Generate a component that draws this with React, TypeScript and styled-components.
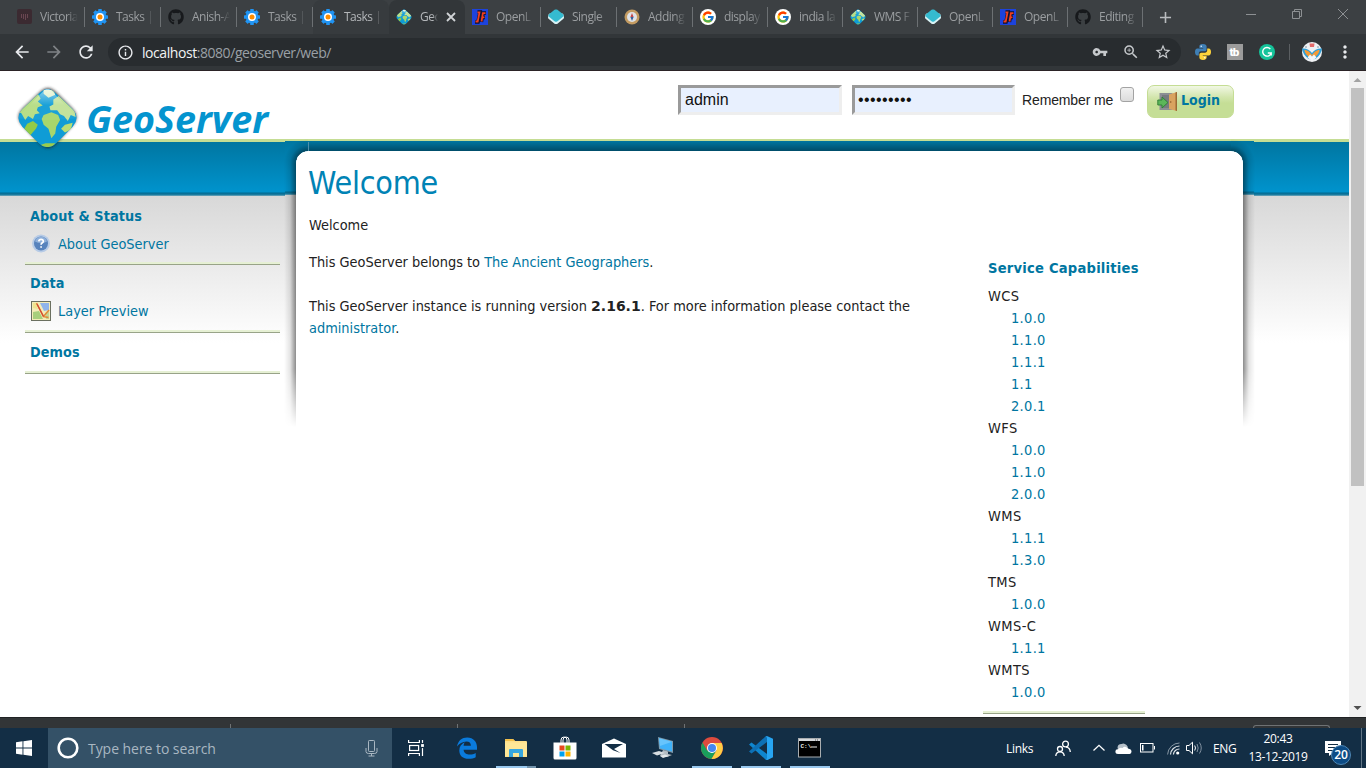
import React from 'react';
import styled, { createGlobalStyle } from 'styled-components';
import { FaGithub } from 'react-icons/fa';
import { FcGoogle } from 'react-icons/fc';
import {
  MdArrowBack, MdArrowForward, MdRefresh, MdInfoOutline, MdVpnKey, MdZoomIn,
  MdStarBorder, MdMoreVert, MdAdd,
} from 'react-icons/md';

const Global = createGlobalStyle`
  * { box-sizing: border-box; }
  body { margin: 0; overflow: hidden; background: #fff; }
  svg { flex: none; }
`;

const ui = `'Open Sans', 'Noto Sans', sans-serif`;
const tahoma = `'DejaVu Sans Condensed', 'DejaVu Sans', sans-serif`;

const Screen = styled.div`
  width: 1366px;
  height: 768px;
  display: flex;
  flex-direction: column;
  overflow: hidden;
  font-family: ${ui};
`;

/* ---------- browser chrome ---------- */

const TabStrip = styled.div`
  height: 34px;
  flex: none;
  display: flex;
  padding-left: 9px;
  background: #3c4043;
`;

const Tab = styled.div<{ $state?: 'active' | 'hover'; $line?: boolean; $w: number }>`
  position: relative;
  width: ${p => p.$w}px;
  flex: none;
  display: flex;
  align-items: center;
  padding-left: 7px;
  gap: 8px;
  color: ${p => (p.$state ? '#b4b7ba' : '#9b9ea1')};
  background: ${p => (p.$state === 'active' ? '#323639' : p.$state === 'hover' ? '#373b3e' : 'none')};
  border-radius: 8px 8px 0 0;
  &::after {
    content: '';
    position: absolute;
    right: 0;
    top: 7px;
    width: 1px;
    height: 20px;
    background: ${p => (p.$line ? '#6c7073' : 'transparent')};
  }
`;

const TabTitle = styled.span<{ $w?: number }>`
  width: ${p => p.$w ?? 38}px;
  flex: none;
  overflow: hidden;
  white-space: nowrap;
  font-size: 12px;
  letter-spacing: -0.5px;
  line-height: 18px;
  mask-image: linear-gradient(90deg, #000 70%, transparent);
`;

const NewTab = styled.div`
  width: 44px;
  display: flex;
  align-items: center;
  justify-content: center;
  color: #b9bcbf;
`;

const WindowButtons = styled.div`
  margin-left: auto;
  height: 28px;
  display: flex;
  svg { width: 46px; height: 28px; display: block; }
`;

const Toolbar = styled.div`
  height: 36px;
  flex: none;
  display: flex;
  align-items: center;
  padding: 0 12px;
  background: #323639;
  color: #e8eaed;
`;

const NavIcons = styled.div`
  display: flex;
  gap: 12px;
  width: 96px;
  flex: none;
  svg { width: 20px; height: 20px; }
  svg:nth-child(2) { color: #7f8386; }
`;

const Address = styled.div`
  width: 1073px;
  height: 28px;
  flex: none;
  border-radius: 14px;
  background: #282c2f;
  display: flex;
  align-items: center;
  padding: 0 9px;
  font-size: 14px;
  color: #9aa0a6;
`;

const Url = styled.span`
  margin-left: 8px;
  letter-spacing: -0.44px;
  flex: 1;
  b { font-weight: 400; color: #f1f3f4; }
`;

const AddressIcons = styled.div`
  display: flex;
  gap: 14px;
  color: #c6c9cc;
  svg { width: 18px; height: 18px; }
  svg:first-child { width: 16px; height: 18px; }
`;

const Extensions = styled.div`
  display: flex;
  align-items: center;
  margin-left: 14px;
  gap: 16px;
`;

const Avatar = styled.div`
  display: flex;
  align-items: center;
  gap: 11px;
  margin-left: 14px;
  padding-left: 12px;
  border-left: 1px solid #5b5f62;
  height: 16px;
  > svg:last-child { margin-left: 2px; }
`;

/* ---------- page ---------- */

const Viewport = styled.div`
  height: 647px;
  flex: none;
  display: flex;
  border-top: 1px solid #2b2326;
`;

const blueBand = (shift: number) => `
  linear-gradient(180deg,
    #c5dd94 0, #c5dd94 ${3 - shift}px,
    #0076a1 ${3 - shift}px, #0092cb ${51 - shift}px, #0092cb ${53 - shift}px,
    #006a92 ${54 - shift}px, #2080a4 ${56 - shift}px, #8cb3c1 ${57 - shift}px,
    #d8d8d8 ${57 - shift}px, #ffffff 204px)`;

const Page = styled.main`
  width: 1349px;
  flex: none;
  overflow: hidden;
  background: #fff;
  font-family: ${tahoma};
  font-size: 14.4px;
  line-height: 22px;
  color: #222;
`;

const Header = styled.header`
  height: 68px;
  display: flex;
  justify-content: space-between;
  padding: 14px 115px 0 12px;
`;

const Brand = styled.a`
  height: 70px;
  svg { display: block; overflow: visible; position: relative; }
`;

const LoginForm = styled.form`
  display: flex;
  align-items: flex-start;
`;

const Field = styled.input`
  width: 164px;
  height: 30px;
  margin-right: 10px;
  padding: 0 4px;
  border: 3px solid;
  border-color: #9a9a9a #eeeeee #eeeeee #9a9a9a;
  background: #e8f0fe;
  font: 16px 'Liberation Sans', sans-serif;
  color: #111;
  outline: none;
  &[type='password'] { letter-spacing: 0.4px; width: 163px; padding-left: 3px; }
`;

const Remember = styled.label`
  display: flex;
  width: 125px;
  margin-left: -3px;
  padding-top: 3px;
  font: 14px/24px 'Liberation Sans', sans-serif;
  letter-spacing: -0.13px;
`;

const Check = styled.span`
  width: 14px;
  height: 15px;
  margin-left: 7px;
  margin-top: -1px;
  border: 1px solid #a3a3a3;
  border-radius: 3px;
  background: linear-gradient(#f0f0f0, #dcdcdc);
`;

const LoginButton = styled.button`
  width: 87px;
  height: 33px;
  display: flex;
  align-items: center;
  gap: 3px;
  padding: 0 0 0 9px;
  border: 1px solid #c5dd94;
  border-radius: 7px;
  background: linear-gradient(#f1f7e4 0, #d3e6ae 35%, #c5de96 55%, #c5de96);
  font: bold 14px ${tahoma};
  color: #0076a1;
  span { margin-top: -3px; }
`;

const Columns = styled.div`
  display: flex;
  height: 578px;
  background: ${blueBand(0)};
`;

const Sidebar = styled.nav`
  width: 285px;
  flex: none;
  padding: 66px 5px 0 25px;
`;

const MenuGroup = styled.section<{ $h: number; $top?: number }>`
  height: ${p => p.$h}px;
  padding: ${p => p.$top ?? 0}px 0 0 5px;
  box-shadow: inset 0 -1px #98a388, inset 0 -3px #e6f0d4;
`;

const MenuTitle = styled.h2`
  margin: 0;
  font: bold 14.3px/22px ${tahoma};
  letter-spacing: 0.1px;
  color: #0076a1;
`;

const MenuLink = styled.a<{ $gap: number }>`
  display: flex;
  align-items: center;
  height: 22px;
  margin: 6px 0 0 1px;
  gap: ${p => p.$gap}px;
  color: #0076a1;
`;

const Center = styled.div`
  width: 969px;
  flex: none;
  padding: 12px 11px 0 11px;
  background: ${blueBand(1)};
`;

const Panel = styled.section`
  position: relative;
  height: 566px;
  padding: 14px 98px 0 13px;
  display: flex;
  justify-content: space-between;
  background: #fff;
  border-radius: 12px 12px 0 0;
  z-index: 0;
  &::before {
    content: '';
    position: absolute;
    z-index: -1;
    inset: -12px -12px auto -12px;
    height: 290px;
    border-radius: 12px;
    mask-image: linear-gradient(#000 230px, transparent 288px);
    background:
      linear-gradient(#4d8fab, #4d8fab) 24px 3px / 1px 9px no-repeat,
      linear-gradient(90deg, transparent, rgba(0, 0, 0, 0.1) 6px, rgba(0, 0, 0, 0.45) 12px, transparent 12px) 0 24px / 12px 100% no-repeat,
      linear-gradient(270deg, transparent, rgba(0, 0, 0, 0.1) 6px, rgba(0, 0, 0, 0.45) 12px, transparent 12px) 100% 24px / 12px 100% no-repeat,
      linear-gradient(transparent 2px, rgba(0, 0, 0, 0.38) 12px, transparent 12px) 24px 0 / calc(100% - 48px) 12px no-repeat,
      radial-gradient(circle at 100% 100%, transparent 12px, rgba(0, 0, 0, 0.42) 12px, rgba(0, 0, 0, 0.1) 18px, transparent 24px) 0 0 / 24px 24px no-repeat,
      radial-gradient(circle at 0 100%, transparent 12px, rgba(0, 0, 0, 0.42) 12px, rgba(0, 0, 0, 0.1) 18px, transparent 24px) 100% 0 / 24px 24px no-repeat;
  }
`;

const Article = styled.article`
  width: 640px;
  a { color: #0076a1; }
  p { margin: 0 0 22px; }
  b { font-family: 'DejaVu Sans', sans-serif; font-size: 14px; }
`;

const Title = styled.h1`
  margin: 0 0 13px -1px;
  font: 400 32px/36px ${tahoma};
  letter-spacing: -0.2px;
  color: #0083b5;
`;

const Lead = styled.div`
  line-height: 22px;
  margin-bottom: 15px;
`;

const Services = styled.aside`
  width: 162px;
  height: 549px;
  padding: 92px 0 0 5px;
  box-shadow: inset 0 -1px #98a388, inset 0 -3px #e6f0d4;
`;

const ServiceTitle = styled.h3`
  margin: 0 0 6px;
  font: bold 14.6px/22px ${tahoma};
  letter-spacing: 0.22px;
  color: #0076a1;
  white-space: nowrap;
`;

const ServiceList = styled.dl`
  margin: 0;
  font-size: 14.5px;
  line-height: 22px;
  dt { letter-spacing: 0.4px; }
  dd { margin: 0 0 0 23px; color: #0076a1; letter-spacing: 0.3px; }
`;

const Scrollbar = styled.div`
  width: 17px;
  background: #f1f1f1;
  display: flex;
  flex-direction: column;
  align-items: center;
`;

const Thumb = styled.div`
  width: 13px;
  height: 398px;
  margin-bottom: auto;
  background: #c1c1c1;
`;

/* ---------- download shelf and taskbar ---------- */

const Shelf = styled.div`
  height: 11px;
  flex: none;
  display: flex;
  align-items: flex-end;
  border-top: 1px solid #202224;
  background: #323537;
`;

const ShelfItem = styled.div<{ $w: number }>`
  width: ${p => p.$w}px;
  height: 4px;
  border-right: 1px solid #6f7274;
`;

const ShelfButton = styled.div`
  width: 77px;
  height: 3px;
  margin-left: auto;
  margin-right: 36px;
  border: 1px solid #6f7274;
  border-bottom: 0;
  border-radius: 4px 4px 0 0;
`;

const Taskbar = styled.footer`
  height: 40px;
  flex: none;
  display: flex;
  background: #132e45;
  color: #fff;
`;

const Slot = styled.div<{ $w?: number }>`
  width: ${p => p.$w ?? 48}px;
  height: 40px;
  flex: none;
  display: flex;
  align-items: center;
  justify-content: center;
`;

const Search = styled.div`
  width: 344px;
  flex: none;
  display: flex;
  align-items: center;
  padding: 0 14px 0 8px;
  background: #345167;
  font-size: 14px;
  color: #a9b7c2;
  span { flex: 1; margin-left: 8px; letter-spacing: -0.05px; }
`;

const Apps = styled.div`
  display: flex;
  gap: 9px;
  margin-left: 7px;
`;

const AppSlot = styled.div<{ $run?: 'one' | 'many' }>`
  width: 40px;
  height: 40px;
  display: flex;
  align-items: center;
  justify-content: center;
  background: ${p =>
    p.$run === 'one'
      ? 'linear-gradient(#99c8ee, #99c8ee) 0 100% / 40px 2px no-repeat'
      : p.$run === 'many'
        ? 'linear-gradient(90deg, #99c8ee 31px, #7293ac 31px) 0 100% / 40px 2px no-repeat'
        : 'none'};
`;

const Tray = styled.div`
  margin-left: auto;
  display: flex;
  align-items: center;
  font-size: 12px;
`;

const TrayText = styled.span<{ $w: number }>`
  width: ${p => p.$w}px;
  flex: none;
  letter-spacing: -0.3px;
  white-space: nowrap;
`;

const Clock = styled.div`
  width: 80px;
  text-align: center;
  line-height: 18px;
  letter-spacing: -0.35px;
`;

const Notice = styled.div`
  position: relative;
  width: 44px;
  height: 40px;
  padding: 12px 0 0 7px;
  border-right: 1px solid #617585;
  margin-right: 4px;
`;

const Badge = styled.span`
  position: absolute;
  left: 13px;
  top: 17px;
  width: 20px;
  height: 20px;
  border-radius: 50%;
  border: 1px solid #4e87b5;
  background: #0c4b85;
  font-size: 12px;
  font-weight: 600;
  line-height: 18px;
  text-align: center;
`;

/* ---------- drawings ---------- */

const Globe = ({ size }: { size: number }) => (
  <svg width={size} height={size} viewBox="0 0 64 64">
    <defs>
      <linearGradient id="gloss" x1="0" y1="0" x2="0" y2="1">
        <stop offset="0" stopColor="#fff" stopOpacity=".6" />
        <stop offset=".55" stopColor="#fff" stopOpacity=".05" />
      </linearGradient>
      <clipPath id="gem"><path d="M24 6Q32-2 40 6L58 23Q66 32 58 41L41 58Q32 66 23 58L6 41Q-2 32 6 23Z" /></clipPath>
    </defs>
    <path d="M24 6Q32-2 40 6L58 23Q66 32 58 41L41 58Q32 66 23 58L6 41Q-2 32 6 23Z" fill="#0f9cd6" />
    <g clipPath="url(#gem)">
      <path d="M6 20L20 8L22 7L25 12L22 15L27 19L22 21L21 24L24 27L19 28L17 33L12 30L9 34L5 27L2 26Z" fill="#b5dc82" />
      <path d="M11 38L17 35L22 39L20 43L14 50L8 43Z" fill="#93cb45" />
      <path d="M28 3H38L40 8L33 11L28 7Z" fill="#dcefc2" />
      <path d="M38 13L44 9L60 25L61 31L56 29L53 35L49 30L45 28L42 24L35 24L34 20L38 18Z" fill="#c1e197" />
      <path d="M28 29L36 26L43 29L45 34L41 41L40 48L36 53L33 43L28 39L26 33Z" fill="#a8d66b" />
      <path d="M46 43L50 39L58 37L56 44L50 47Z" fill="#b9dd74" />
      <path d="M24 60L30 58L40 58L36 64H28Z" fill="#9bcc4c" />
      <path d="M32 0L64 32Q32 36 0 32Z" fill="url(#gloss)" />
    </g>
  </svg>
);

const BrandLogo = () => (
  <svg width="262" height="68" viewBox="0 0 262 68">
    <defs><filter id="soft" x="-20%" y="-20%" width="140%" height="140%"><feGaussianBlur stdDeviation="1.6" /></filter></defs>
    <path d="M28 7Q36-1 44 7L60 23Q69 32 60 41L44 59Q36 67 28 59L11 41Q2 32 11 23Z" fill="#222" opacity=".75" filter="url(#soft)" />
    <g transform="translate(4.5 2)"><Globe size={62} /></g>
    <text x="74" y="47.500" textLength="182" lengthAdjust="spacingAndGlyphs" fontFamily="'Open Sans', sans-serif" fontWeight="700" fontStyle="italic" fontSize="38" fill="#0494cf">GeoServer</text>
  </svg>
);

const Gear = () => (
  <svg width="16" height="16" viewBox="0 0 16 16">
    <g fill="#2094f3">
      <circle cx="8" cy="8" r="6.4" />
      {[0, 45, 90, 135].map(a => <rect key={a} x="6.2" y="0" width="3.6" height="16" rx=".6" transform={`rotate(${a} 8 8)`} />)}
    </g>
    <circle cx="8" cy="8" r="4" fill="#fff" />
    <circle cx="8" cy="8" r="2.5" fill="#fb8c00" />
  </svg>
);

const Victoria = () => (
  <svg width="16" height="16"><rect x="1" width="15" height="15" rx="2" fill="#3b2a31" /><path d="M5.500 5v4M7.500 5v5M9.500 5v6M11.500 5v4" stroke="#6a4652" /></svg>
);

const OpenF = () => (
  <svg width="16" height="16">
    <rect width="16" height="16" fill="#1d43dc" />
    <path d="M5.500 3H8L6 13H3" fill="none" stroke="#10102c" strokeWidth="3.600" />
    <path d="M9.500 13L11 4H14M10.500 8.500H13" fill="none" stroke="#10102c" strokeWidth="3.400" />
    <path d="M5.500 3.300H7.500L5.700 12.500H3.500" fill="none" stroke="#f0401f" strokeWidth="1.800" />
    <path d="M9.500 12.500L10.900 4.200H13.500M10.500 8.300H12.500" fill="none" stroke="#f0401f" strokeWidth="1.800" />
  </svg>
);

const OpenGem = () => (
  <svg width="16" height="16" strokeLinejoin="round"><path d="M1.500 8.500L7.500 13.500H8.500L14.500 8.500L14 6H2Z" fill="#d8f2f5" stroke="#d8f2f5" strokeWidth="3" /><path d="M7.500 2H8.500L14 6.500L8.500 11.200H7.500L2 6.500Z" fill="#35bbd0" stroke="#35bbd0" strokeWidth="3" /></svg>
);

const Compass = () => (
  <svg width="16" height="16"><circle cx="8" cy="8" r="7.500" fill="#c39b62" /><circle cx="8" cy="8" r="5" fill="#dfe3e8" /><path d="M8 4L9.600 8H6.400Z" fill="#c4484a" /><path d="M8 12L9.600 8H6.400Z" fill="#35619b" /></svg>
);

const GoogleDisc = () => (
  <svg width="16" height="16"><circle cx="8" cy="8" r="8" fill="#fff" /><FcGoogle x="1.300" y="1.300" width="13.400" height="13.400" size={13.4} /></svg>
);

const TabClose = () => (
  <svg width="10" height="10"><path d="M1 1L9 9M9 1L1 9" stroke="#d0d3d6" strokeWidth="1.800" /></svg>
);

const Python = () => (
  <svg width="16" height="16" viewBox="0 0 16 16">
    <path d="M8 0C5 0 4.400 1.300 4.400 2.400V4H8.200V4.600H2.400C.8 4.600 0 6 0 8s.8 3.400 2.200 3.400H3.800V9.400C3.800 8.200 4.800 7.300 6 7.300H9.700C10.800 7.300 11.600 6.500 11.600 5.400V2.400C11.600 1 10.400 0 8 0Z" fill="#3f7fb5" />
    <path d="M8 16c3 0 3.600-1.300 3.600-2.400V12H7.800V11.400H13.600C15.200 11.400 16 10 16 8S15.200 4.600 13.800 4.600H12.200V6.600C12.200 7.800 11.200 8.700 10 8.700H6.300C5.200 8.700 4.400 9.500 4.400 10.600V13.600C4.400 15 5.600 16 8 16Z" fill="#ffd43b" />
    <circle cx="6.200" cy="2.300" r=".7" fill="#fff" /><circle cx="9.800" cy="13.700" r=".7" fill="#fff" />
  </svg>
);

const TubeBuddy = () => (
  <svg width="16" height="16"><rect width="16" height="16" fill="#9b9b9b" /><text x="2.500" y="12.200" fontFamily="Roboto, sans-serif" fontWeight="900" fontSize="11.500" letterSpacing="-.6" fill="#fff">tb</text></svg>
);

const Grammarly = () => (
  <svg width="16" height="16"><circle cx="8" cy="8" r="8" fill="#15c39a" /><path d="M11.300 5A4.300 4.300 0 1 0 12.200 9H8.800M12.200 8.500V11.500" fill="none" stroke="#fff" strokeWidth="1.400" /></svg>
);

const Profile = () => (
  <svg width="20" height="20" viewBox="0 0 20 20">
    <circle cx="10" cy="10" r="10" fill="#eef1f4" />
    <path d="M0 6.500C4 6 8 8 10 11C12 8 16 6 20 6.500C19.500 11 17 14 14 16.500L10 18L6 16.500C3 14 .5 11 0 6.500Z" fill="#2f9fd8" />
    <path d="M2.500 8C6 8 8 10.500 10 13C12 10.500 14 8 17.500 8C17 12 14.500 13.500 12.500 15.500L10 13.500L7.500 15.500C5.500 13.500 3 12 2.500 8Z" fill="#f59a35" />
    <path d="M5.500 15.500L8 12.500L10 14.500L12 12.500L14.500 15.500L10 19Z" fill="#f4f6f8" />
    <path d="M7.500 1.500H12.500L12 5H8Z" fill="#e46a6a" /><circle cx="4" cy="5" r="1" fill="#a9b5bd" /><circle cx="16" cy="5" r="1" fill="#a9b5bd" />
  </svg>
);

const Door = () => (
  <svg width="21" height="21" viewBox="0 0 21 21">
    <rect x="2.500" y="2" width="13" height="17" fill="#8c8f93" /><rect x="5" y="4" width="8" height="13" fill="#777b80" />
    <path d="M12 3.500L20 1V20L12 18Z" fill="#d9a35f" /><path d="M18.500 1.500L20 1V20L18.500 19.600Z" fill="#9c6a34" />
    <circle cx="13.700" cy="11" r=".8" fill="#8b5a28" />
    <path d="M.8 9H5V6L11 11.500L5 17V14H.8Z" fill="#5cb65a" stroke="#2d7d33" strokeWidth=".9" />
  </svg>
);

const Help = () => (
  <svg width="20" height="20" viewBox="0 0 20 20">
    <circle cx="10" cy="9.500" r="9" fill="#b7cbe6" /><circle cx="10" cy="9.500" r="7" fill="#5783bd" />
    <path d="M4 7.500A6.200 6.200 0 0 1 16 7.500Q10 10.500 4 7.500Z" fill="#8fb0da" />
    <path d="M7.800 7.300Q8 5.300 10.100 5.300T12.300 7.200Q12.300 8.500 10.900 9.100Q10.100 9.500 10.100 10.800M10.100 12.200V13.800" fill="none" stroke="#fff" strokeWidth="1.700" />
  </svg>
);

const MapIcon = () => (
  <svg width="20" height="20" viewBox="0 0 20 20">
    <rect x=".5" y=".5" width="19" height="19" fill="#f4ecb8" stroke="#6b7060" />
    <path d="M9 2H18V9L13 10Z" fill="#8fb4ea" /><path d="M2 2H5L7 8L2 7Z" fill="#efe48e" />
    <path d="M2 11L8 10L12 18H2Z" fill="#a8cf7c" /><path d="M14 12L18 10V18H15Z" fill="#c2d894" />
    <path d="M5.500 2L12.500 15.500L17.500 16.500M12.500 15.500L18 9" fill="none" stroke="#e08a3a" strokeWidth="1.500" />
    <path d="M6 3L12.500 15.500" stroke="#d24a35" strokeWidth="1.300" />
  </svg>
);

const Windows = () => (
  <svg width="16" height="16" fill="#fff"><path d="M0 2.200L6.500 1.300V7.500H0ZM7.400 1.200L16 0V7.500H7.400ZM0 8.400H6.500V14.700L0 13.800ZM7.400 8.400H16V16L7.400 14.800Z" /></svg>
);

const Mic = () => (
  <svg width="13" height="17" fill="none" stroke="#a9b7c2"><rect x="3.500" y=".5" width="6" height="11" rx=".8" /><path d="M1 8V11.500Q1 13.500 3.500 13.500H9.500Q12 13.500 12 11.500V8M6.500 13.500V16M3.500 16H9.500" /></svg>
);

const TaskView = () => (
  <svg width="17" height="16" fill="none" stroke="#fff" strokeWidth="1.200"><path d="M.6 0V2.500H11.400V0M.6 16V13.500H11.400V16M14.500 0V16" /><rect x="1.600" y="5.500" width="9" height="5" /><rect x="12.500" y="3.500" width="4" height="4" fill="#fff" stroke="#132e45" /></svg>
);

const Edge = () => (
  <svg width="22" height="22" viewBox="0 0 22 22"><path d="M1 9.500C2 3.500 6 .4 11.200 .4C17.500 .4 21 5 21 10V12.700H7.600C7.800 16 10.800 17.600 13.700 17.600C16.200 17.600 18 17 19.700 16V20.300C17.700 21.300 15.500 21.800 12.700 21.800C7 21.800 3.300 18.600 3.300 13.400C3.300 9.700 5.300 6.900 8.700 5.200C8 6.300 7.700 7.500 7.600 8.800H14.900C14.900 6 13.300 4.500 10.500 4.500C6.500 4.500 3.200 6.700 1 9.500Z" fill="#0a7bdd" /></svg>
);

const Explorer = () => (
  <svg width="22" height="20" viewBox="0 0 22 20"><path d="M0 2Q0 1 1 1H8L10 3H21Q22 3 22 4V19H0Z" fill="#ffe08a" /><path d="M0 2Q0 1 1 1H8L10 3H0Z" fill="#f3c04b" /><path d="M0 4.500H22V18H0Z" fill="#ffe797" /><path d="M4 19V12Q4 11 5 11H17Q18 11 18 12V19H14V15H8V19Z" fill="#38a7e0" /></svg>
);

const Store = () => (
  <svg width="24" height="24" viewBox="0 0 24 24"><path d="M8 7V4Q8 1 11 1T14 4V7M10 7V4Q10 1 13 1T16 4V7" fill="none" stroke="#fff" /><path d="M.5 6.500H23.500V22Q23.500 23.500 22 23.500H2Q.5 23.500 .5 22Z" fill="#fff" /><path d="M6.500 9.500H11.500V14.500H6.500Z" fill="#e8491d" /><path d="M12.500 9.500H17.500V14.500H12.500Z" fill="#7db500" /><path d="M6.500 15.500H11.500V20.500H6.500Z" fill="#00a1ef" /><path d="M12.500 15.500H17.500V20.500H12.500Z" fill="#fcb400" /></svg>
);

const Mail = () => (
  <svg width="24" height="20" viewBox="0 0 24 20"><path d="M0 6L12 .5L24 6V19.500H0Z" fill="#fff" /><path d="M2.500 6H21L12 11L18.500 15L11 12.200Z" fill="#132e45" /></svg>
);

const Computer = () => (
  <svg width="24" height="24" viewBox="0 0 24 24"><path d="M7 1L22 5V17L8 13Z" fill="#7e99aa" /><path d="M8 2.200L21 5.800V15.600L9 12.200Z" fill="#3fb2fa" /><path d="M8 2.200L21 5.800L9 10Z" fill="#67c4fc" /><path d="M12 14L17 15.500V18L21 19L16 21L9 20Z" fill="#b4bcc2" /><path d="M1 17L8 15L14 17L6 19.500Z" fill="#d7dce0" /><path d="M9 20L14 18.500L18 20L12 22Z" fill="#e4e8ea" /></svg>
);

const Chrome = () => (
  <svg width="22" height="22" viewBox="0 0 22 22"><circle cx="11" cy="11" r="11" fill="#dd4b3e" /><path d="M1.500 5.500A11 11 0 0 0 10.500 22L15.500 13.500L11 11L6.300 13.700Z" fill="#1a9f5c" /><path d="M20.600 6H11L15.500 13.500L10.500 22A11 11 0 0 0 20.600 6Z" fill="#ffce45" /><circle cx="11" cy="11" r="5" fill="#fff" /><circle cx="11" cy="11" r="4" fill="#4587f0" /></svg>
);

const Code = () => (
  <svg width="24" height="24" viewBox="0 0 24 24"><path d="M0 8.500L2.500 6.500L18 18V23.500L17 24Z" fill="#0f86cf" /><path d="M0 15.500L2.500 17.500L18 6V.5L17 0Z" fill="#0d70b5" /><path d="M17 0L18.500 .2L24 2.800V21.200L18.500 24L17 23.700L18 22V2Z" fill="#27a5f2" /></svg>
);

const Cmd = () => (
  <svg width="24" height="20" viewBox="0 0 24 20"><rect x=".5" y=".5" width="22" height="18.500" fill="#000" stroke="#a9adb0" /><path d="M1 1H22V3H1Z" fill="#d6d9dc" /><path d="M17 2h1M19 2h1" stroke="#555" /><text x="2.500" y="9.500" fontFamily="'Liberation Mono', monospace" fontSize="6" fontWeight="700" fill="#eee">C:\</text><path d="M13 9H19" stroke="#eee" /></svg>
);

const People = () => (
  <svg width="16" height="17" fill="none" stroke="#fff" strokeWidth="1.300"><circle cx="10.500" cy="4" r="2.900" /><path d="M15.300 12Q15 7.500 11 7.200" /><circle cx="5" cy="9" r="2.500" /><path d="M.8 16Q1 11.800 5 11.800T9.200 16" /></svg>
);

const Caret = () => (
  <svg width="12" height="8" fill="none" stroke="#fff" strokeWidth="1.300"><path d="M.5 6.500L6 1.300L11.500 6.500" /></svg>
);

const Cloud = () => (
  <svg width="17" height="11"><path d="M2.500 5A4 4 0 0 1 6.500 1Q9-.5 11.500 2Q13 3 13 6H3Z" fill="#b7c1c9" /><path d="M3 11Q.4 11 .4 8.500T3 6.200Q4.500 4 7.500 5Q10 2.500 13 5.500Q16.500 6 16.500 8.600T14 11Z" fill="#fff" /></svg>
);

const Battery = () => (
  <svg width="16" height="10"><rect x=".5" y=".5" width="12.500" height="8.500" fill="none" stroke="#fff" /><path d="M14.500 3V6.500" stroke="#fff" /><rect x="2" y="2" width="1.500" height="5.500" fill="#fff" /></svg>
);

const Wifi = () => (
  <svg width="13" height="13" fill="none"><path d="M.6 12.500A12 12 0 0 1 12.500 1" stroke="#8898a5" /><path d="M3.500 12.500A9 9 0 0 1 12.500 4M6.400 12.500A6 6 0 0 1 12.500 7" stroke="#dfe5ea" strokeWidth="1.200" /><circle cx="10.700" cy="11" r="1.600" fill="#fff" /></svg>
);

const Speaker = () => (
  <svg width="17" height="14" fill="none" stroke="#fff"><path d="M.5 4.500H3L6.500 1.200V12.800L3 9.500H.5ZM8.700 4.500Q10.300 7 8.700 9.500" /><path d="M11 3Q13.400 7 11 11M13.500 1.500Q17 7 13.500 12.500" stroke="#8090a0" /></svg>
);

const Arrow = ({ up }: { up?: boolean }) => (
  <svg width="17" height="17"><path d={up ? 'M4.500 11L8.500 7L12.500 11Z' : 'M4.500 6L8.500 10L12.500 6Z'} fill={up ? '#a3a3a3' : '#505050'} /></svg>
);

/* ---------- data ---------- */

const tabs: { icon: React.ReactNode; title: string; line?: boolean; state?: 'active' | 'hover' }[] = [
  { icon: <Victoria />, title: 'Victoria', line: true },
  { icon: <Gear />, title: 'Tasks |', line: true },
  { icon: <FaGithub size={16} color="#17191c" />, title: 'Anish-A', line: true },
  { icon: <Gear />, title: 'Tasks |', line: true },
  { icon: <Gear />, title: 'Tasks |', state: 'hover' },
  { icon: <Globe size={16} />, title: 'Geo', state: 'active' },
  { icon: <OpenF />, title: 'OpenL' },
  { icon: <OpenGem />, title: 'Single', line: true },
  { icon: <Compass />, title: 'Adding', line: true },
  { icon: <GoogleDisc />, title: 'display', line: true },
  { icon: <GoogleDisc />, title: 'india la', line: true },
  { icon: <Globe size={16} />, title: 'WMS F', line: true },
  { icon: <OpenGem />, title: 'OpenL', line: true },
  { icon: <OpenF />, title: 'OpenL', line: true },
  { icon: <FaGithub size={16} color="#17191c" />, title: 'Editing', line: true },
];
tabs[6].line = true;

const services: [string, string[]][] = [
  ['WCS', ['1.0.0', '1.1.0', '1.1.1', '1.1', '2.0.1']],
  ['WFS', ['1.0.0', '1.1.0', '2.0.0']],
  ['WMS', ['1.1.1', '1.3.0']],
  ['TMS', ['1.0.0']],
  ['WMS-C', ['1.1.1']],
  ['WMTS', ['1.0.0']],
];

export default function App() {
  return (
    <Screen>
      <Global />
      <TabStrip>
        {tabs.map((t, i) => (
          <Tab key={i} $state={t.state} $line={t.line} $w={i < 9 ? 76 : 75}>
            {t.icon}
            <TabTitle $w={t.state === 'active' ? 18 : 38}>{t.title}</TabTitle>
            {t.state === 'active' && <TabClose />}
          </Tab>
        ))}
        <NewTab><MdAdd size={19} /></NewTab>
        <WindowButtons>
          <svg fill="none" stroke="#8d9093"><path d="M18 14.500H28" /></svg>
          <svg fill="none" stroke="#8d9093"><path d="M18.500 11.500H25.500V18.500H18.500ZM20.500 11V9.500H27.500V16.500H26" /></svg>
          <svg fill="none" stroke="#8d9093"><path d="M18 9L28 19M28 9L18 19" /></svg>
        </WindowButtons>
      </TabStrip>

      <Toolbar>
        <NavIcons><MdArrowBack /><MdArrowForward /><MdRefresh /></NavIcons>
        <Address>
          <MdInfoOutline size={17} color="#e8eaed" />
          <Url><b>localhost</b>:8080/geoserver/web/</Url>
          <AddressIcons><MdVpnKey /><MdZoomIn /><MdStarBorder /></AddressIcons>
        </Address>
        <Extensions><Python /><TubeBuddy /><Grammarly /></Extensions>
        <Avatar><Profile /><MdMoreVert size={20} /></Avatar>
      </Toolbar>

      <Viewport>
        <Page>
          <Header>
            <Brand><BrandLogo /></Brand>
            <LoginForm>
              <Field defaultValue="admin" />
              <Field type="password" defaultValue="geoserver" />
              <Remember>Remember me<Check /></Remember>
              <LoginButton type="button"><Door /><span>Login</span></LoginButton>
            </LoginForm>
          </Header>
          <Columns>
            <Sidebar>
              <MenuGroup $h={60}>
                <MenuTitle>About &amp; Status</MenuTitle>
                <MenuLink $gap={7}><Help />About GeoServer</MenuLink>
              </MenuGroup>
              <MenuGroup $h={68} $top={7}>
                <MenuTitle>Data</MenuTitle>
                <MenuLink $gap={7}><MapIcon />Layer Preview</MenuLink>
              </MenuGroup>
              <MenuGroup $h={41} $top={8}>
                <MenuTitle>Demos</MenuTitle>
              </MenuGroup>
            </Sidebar>
            <Center>
              <Panel>
                <Article>
                  <Title>Welcome</Title>
                  <Lead>Welcome</Lead>
                  <p>This GeoServer belongs to <a>The Ancient Geographers</a>.</p>
                  <p>This GeoServer instance is running version <b>2.16.1</b>. For more information please contact the <a>administrator</a>.</p>
                </Article>
                <Services>
                  <ServiceTitle>Service Capabilities</ServiceTitle>
                  <ServiceList>
                    {services.map(([name, versions]) => (
                      <React.Fragment key={name}>
                        <dt>{name}</dt>
                        {versions.map(v => <dd key={v}>{v}</dd>)}
                      </React.Fragment>
                    ))}
                  </ServiceList>
                </Services>
              </Panel>
            </Center>
          </Columns>
        </Page>
        <Scrollbar><Arrow up /><Thumb /><Arrow /></Scrollbar>
      </Viewport>

      <Shelf>
        <ShelfItem $w={231} /><ShelfItem $w={227} /><ShelfItem $w={227} />
        <ShelfButton />
      </Shelf>
      <Taskbar>
        <Slot><Windows /></Slot>
        <Search>
          <svg width="24" height="24"><circle cx="12" cy="12" r="9.300" fill="none" stroke="#fff" strokeWidth="2.600" /></svg>
          <span>Type here to search</span>
          <Mic />
        </Search>
        <Slot><TaskView /></Slot>
        <Apps>
          <AppSlot><Edge /></AppSlot>
          <AppSlot $run="many"><Explorer /></AppSlot>
          <AppSlot><Store /></AppSlot>
          <AppSlot><Mail /></AppSlot>
          <AppSlot><Computer /></AppSlot>
          <AppSlot $run="one"><Chrome /></AppSlot>
          <AppSlot $run="one"><Code /></AppSlot>
          <AppSlot $run="one"><Cmd /></AppSlot>
        </Apps>
        <Tray>
          <TrayText $w={43}>Links</TrayText>
          <Slot $w={28}><People /></Slot>
          <Slot $w={44}><Caret /></Slot>
          <Slot $w={4}><Cloud /></Slot>
          <Slot $w={46}><Battery /></Slot>
          <Slot $w={4}><Wifi /></Slot>
          <Slot $w={38}><Speaker /></Slot>
          <TrayText $w={25}>ENG</TrayText>
          <Clock>20:43<br />13-12-2019</Clock>
          <Notice>
            <svg width="17" height="17"><path d="M0 1H16V13H8L4 16V13H0Z" fill="#fff" /><path d="M3 4.500H13M3 7.500H13M3 10.500H10" stroke="#132e45" /></svg>
            <Badge>20</Badge>
          </Notice>
        </Tray>
      </Taskbar>
    </Screen>
  );
}
